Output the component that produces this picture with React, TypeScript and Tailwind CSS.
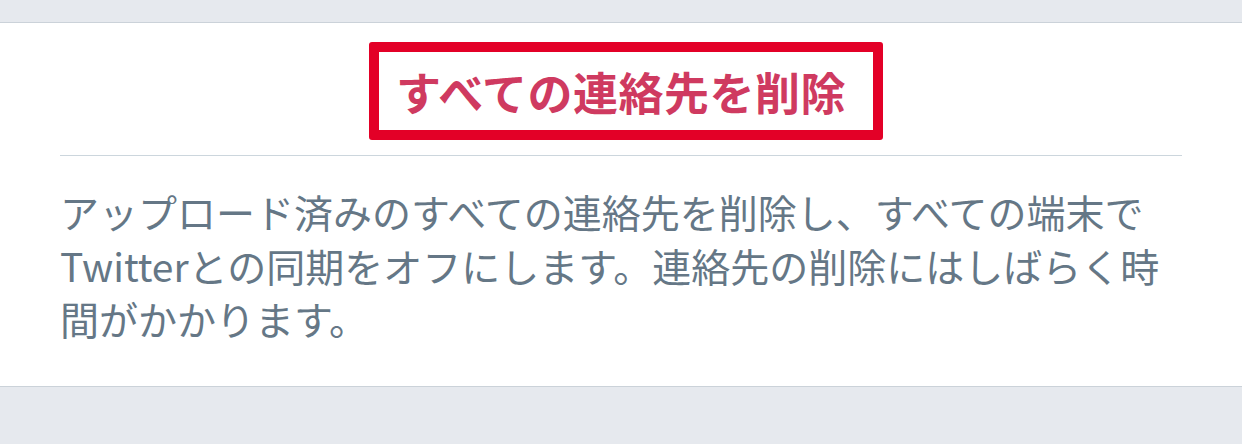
export default function App() {
  return (
    <div
      className="w-[1242px] h-[444px] bg-[#e6e9ee] overflow-hidden"
      style={{ fontFamily: '"Noto Sans CJK JP", "Noto Sans", sans-serif' }}
    >
      <div className="h-[22px]" />
      <section className="bg-white border-y border-[#cbd2d9] px-[60px] pt-[19px] pb-[40px]">
        <div className="flex justify-center pl-[10px]">
          <div className="w-[514px] h-[98px] border-[10px] border-[#e30027] rounded-[3px] flex items-center justify-center pr-[10px]">
            <h1 className="text-[45px] leading-none font-bold text-[#cf3a60] tracking-[0.5px]">
              すべての連絡先を削除
            </h1>
          </div>
        </div>
        <div className="mt-[15px] h-px bg-[#ccd6dd]" />
        <p className="mt-[29px] text-[39px] leading-[53.5px] text-[#657786] whitespace-nowrap">
          アップロード済みのすべての連絡先を削除し、すべての端末で
          <br />
          Twitterとの同期をオフにします。連絡先の削除にはしばらく時
          <br />
          間がかかります。
        </p>
      </section>
    </div>
  )
}
